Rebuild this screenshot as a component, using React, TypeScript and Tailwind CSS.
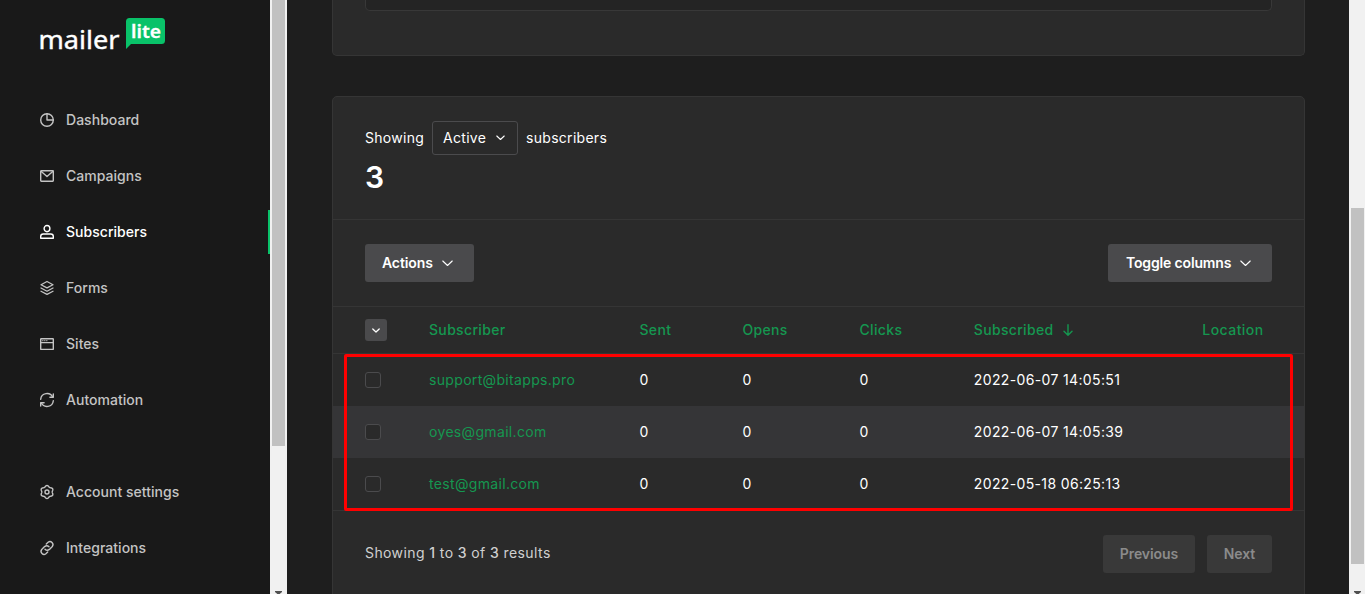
import React from "react";

const stroke = {
  fill: "none",
  stroke: "currentColor",
  strokeWidth: 1.4,
  strokeLinecap: "round" as const,
  strokeLinejoin: "round" as const,
};

function Icon({ children }: { children: React.ReactNode }) {
  return (
    <svg width="14" height="14" viewBox="0 0 14 14" className="shrink-0 overflow-visible" {...stroke}>
      {children}
    </svg>
  );
}

function Chevron({ w, sw = 1.1 }: { w: number; sw?: number }) {
  return (
    <svg width={w} height={w / 2 + 1} viewBox={`0 0 ${w} ${w / 2 + 1}`} className="shrink-0" {...stroke} strokeWidth={sw}>
      <path d={`M0.8 1L${w / 2} ${w / 2}L${w - 0.8} 1`} />
    </svg>
  );
}

// Six-lobed gear outline, one lobe pointing up.
const gearPath =
  "M" +
  Array.from({ length: 72 }, (_, i) => {
    const a = (i / 72) * Math.PI * 2;
    const r = 5.85 + 0.65 * Math.cos(6 * a);
    return `${(7 + r * Math.sin(a)).toFixed(2)} ${(7 - r * Math.cos(a)).toFixed(2)}`;
  }).join("L") +
  "Z";

const icons = {
  dashboard: (
    <Icon>
      <circle cx="7" cy="7" r="6.3" />
      <path d="M7 0.7V7H13.3" />
    </Icon>
  ),
  campaigns: (
    <Icon>
      <rect x="0.7" y="1.8" width="12.6" height="10.4" rx="0.6" />
      <path d="M1 2.3L7 7.5L13 2.3" />
    </Icon>
  ),
  subscribers: (
    <Icon>
      <ellipse cx="7" cy="3.6" rx="2.9" ry="3.1" />
      <path d="M0.7 13.3V11.4C0.7 10 1.8 9 3.2 9H10.8C12.2 9 13.3 10 13.3 11.4V13.3Z" />
    </Icon>
  ),
  forms: (
    <Icon>
      <g strokeWidth="1.25">
        <path d="M7 0.5L13 3.7L7 6.9L1 3.7Z" />
        <path d="M1 7L7 10.2L13 7" />
        <path d="M1 10.2L7 13.4L13 10.2" />
      </g>
    </Icon>
  ),
  sites: (
    <Icon>
      <rect x="0.7" y="1.8" width="12.6" height="10.6" rx="0.5" />
      <path d="M0.7 5.6H13.3" />
      <path d="M2.6 3.7H3M4.6 3.7H5M6.6 3.7H7" strokeWidth="1" />
    </Icon>
  ),
  automation: (
    <Icon>
      <path d="M13.3 0.9V4.3H9.9" />
      <path d="M0.7 6.2A6.3 6.3 0 0 1 12.7 4.2" />
      <path d="M0.7 13.1V9.7H4.1" />
      <path d="M13.3 7.8A6.3 6.3 0 0 1 1.3 9.8" />
    </Icon>
  ),
  settings: (
    <Icon>
      <circle cx="7" cy="7" r="2" />
      <path d={gearPath} />
    </Icon>
  ),
  integrations: (
    <Icon>
      <path d="M5 8.2A3.2 3.2 0 0 0 9.4 8.4L12.3 5.5A3 3 0 0 0 8.1 1.3L6.3 3" />
      <path d="M9 5.8A3.2 3.2 0 0 0 4.6 5.6L1.7 8.5A3 3 0 0 0 5.9 12.7L7.7 11" />
    </Icon>
  ),
};

function NavItem({ icon, label, active }: { icon: React.ReactNode; label: string; active?: boolean }) {
  return (
    <div
      className={
        active
          ? "flex h-11 shrink-0 items-center gap-3 border-r-2 border-[#09c269] pl-10 text-white"
          : "flex h-11 shrink-0 items-center gap-3 pl-10 text-[#c4c4c4]"
      }
    >
      {icon}
      <span className="text-[14px] font-medium tracking-[0.03px]">{label}</span>
    </div>
  );
}

function Logo() {
  return (
    <svg width="130" height="48" viewBox="-4 -7 130 48" className="mt-[10px] ml-9 shrink-0 overflow-visible">
      <text x="-1.500" y="32" fill="#fff" stroke="#fff" strokeWidth="0.400" fontFamily="'Noto Sans', sans-serif" fontSize="26" textLength="81" lengthAdjust="spacingAndGlyphs">
        mailer
      </text>
      <path d="M89.500 1H121.500Q125 1 125 4.500V23.500Q125 27 121.500 27H91L86 32V4.500Q86 1 89.500 1Z" fill="#09c269" />
      <text x="91" y="21" fill="#fff" stroke="#fff" strokeWidth="0.300" fontFamily="'Noto Sans', sans-serif" fontWeight="600" fontSize="18.500" textLength="30" lengthAdjust="spacingAndGlyphs">
        lite
      </text>
    </svg>
  );
}

function DownArrow() {
  return (
    <svg width="7" height="4" viewBox="0 0 7 4" className="shrink-0" fill="#505050">
      <path d="M0 0H7V1L3.500 4L0 1Z" />
    </svg>
  );
}

const cols = "grid grid-cols-[64px_210.500px_103px_117px_114.300px_228.500px_1fr] items-center pl-8";

const rows = [
  { email: "support@bitapps.pro", date: "2022-06-07 14:05:51" },
  { email: "oyes@gmail.com", date: "2022-06-07 14:05:39" },
  { email: "test@gmail.com", date: "2022-05-18 06:25:13" },
];

export default function App() {
  return (
    <div className="flex h-[594px] w-[1365px] overflow-hidden bg-[#1e1e1e] font-['Inter',sans-serif] text-[14px] leading-5 text-white">
      <nav className="flex w-[270px] shrink-0 flex-col bg-[#191919]">
        <Logo />
        <div className="mt-10 flex flex-col gap-3">
          <NavItem icon={icons.dashboard} label="Dashboard" />
          <NavItem icon={icons.campaigns} label="Campaigns" />
          <NavItem icon={icons.subscribers} label="Subscribers" active />
          <NavItem icon={icons.forms} label="Forms" />
          <NavItem icon={icons.sites} label="Sites" />
          <NavItem icon={icons.automation} label="Automation" />
        </div>
        <div className="mt-12 flex flex-col gap-3">
          <NavItem icon={icons.settings} label="Account settings" />
          <NavItem icon={icons.integrations} label="Integrations" />
        </div>
      </nav>

      <div className="flex w-[17px] shrink-0 flex-col items-center justify-between bg-[#f1f1f1]">
        <div className="h-[446px] w-[13px] bg-[#c1c1c1]" />
        <div className="h-[3px] overflow-hidden">
          <DownArrow />
        </div>
      </div>

      <main className="flex min-w-0 flex-1 flex-col gap-10 pr-11 pl-[45px]">
        <section className="h-14 shrink-0 rounded-b-[5px] border border-t-0 border-[#353535] bg-[#2a2a2a] px-8">
          <div className="h-[11px] rounded-b-[5px] border border-t-0 border-[#383838] bg-[#242424]" />
        </section>

        <section className="relative h-[520px] shrink-0 rounded-t-[5px] border border-[#353535] bg-[#2a2a2a]">
          <div className="h-[123px] border-b border-[#353535] px-8 pt-6">
            <div className="flex h-[34px] items-center gap-2 tracking-[0.28px]">
              <span>Showing</span>
              <div className="flex h-[34px] w-[86px] items-center justify-between rounded-[3px] border border-[#4b4b4d] pr-[12px] pl-[10px]">
                <span>Active</span>
                <Chevron w={9} />
              </div>
              <span>subscribers</span>
            </div>
            <div className="mt-1 text-[30px] leading-9 font-semibold">3</div>
          </div>

          <div className="flex h-[87px] items-center justify-between border-b border-[#353535] px-8">
            <button className="flex h-[38px] w-[109px] items-center gap-[9px] rounded-[3px] bg-[#4a4a4c] pl-[17px] font-semibold tracking-[-0.1px]">
              Actions
              <Chevron w={11} />
            </button>
            <button className="flex h-[38px] w-[164px] items-center gap-[9px] rounded-[3px] bg-[#4a4a4c] pl-[18px] font-semibold tracking-[-0.16px]">
              Toggle columns
              <Chevron w={11} />
            </button>
          </div>

          <div className={`${cols} h-[47px] border-b border-[#353535] font-medium tracking-[0.33px] text-[#159750]`}>
            <span className="flex size-[22px] items-center justify-center rounded-[3px] bg-[#4a4a4c] text-white">
              <Chevron w={8} sw={1.3} />
            </span>
            <span>Subscriber</span>
            <span>Sent</span>
            <span>Opens</span>
            <span>Clicks</span>
            <span className="flex items-center gap-[9px]">
              Subscribed
              <svg width="10" height="12" viewBox="0 0 10 12" {...stroke}>
                <path d="M5 0.700V11M1 7.300L5 11.300L9 7.300" />
              </svg>
            </span>
            <span className="tracking-[0.45px]">Location</span>
          </div>

          {rows.map((row, i) => (
            <div key={row.email} className={i === 1 ? `${cols} h-[52px] bg-[#353537]` : `${cols} h-[52px]`}>
              <span className="size-4 rounded-[3px] border border-[#4b4b4d] bg-[#2a2a2a]" />
              <span className="tracking-[0.33px] text-[#159750]">{row.email}</span>
              <span>0</span>
              <span>0</span>
              <span>0</span>
              <span className="tracking-[0.36px]">{row.date}</span>
            </div>
          ))}

          <div className="flex h-[87px] items-center justify-between border-t border-[#353535] px-8">
            <span className="-mt-0.5 tracking-[0.4px] text-[#d0d0d0]">
              Showing <span className="font-medium">1</span> to <span className="font-medium">3</span> of{" "}
              <span className="font-medium">3</span> results
            </span>
            <div className="flex gap-3 font-semibold tracking-[-0.07px] text-[#8b8b8b]">
              <button className="h-[38px] w-[92px] rounded-[3px] bg-[#393939]">Previous</button>
              <button className="h-[38px] w-[65px] rounded-[3px] bg-[#393939]">Next</button>
            </div>
          </div>

          <div className="pointer-events-none absolute top-[257px] left-[11px] h-[157px] w-[949px] rounded-[2px] border-3 border-[#ff0000]" />
        </section>
      </main>

      <div className="flex w-4 shrink-0 flex-col justify-between bg-[#f1f1f1] pl-[2px]">
        <div className="mt-[208px] h-[356px] w-[13px] bg-[#c1c1c1]" />
        <div className="ml-[3px] h-[3px] overflow-hidden">
          <DownArrow />
        </div>
      </div>
    </div>
  );
}
